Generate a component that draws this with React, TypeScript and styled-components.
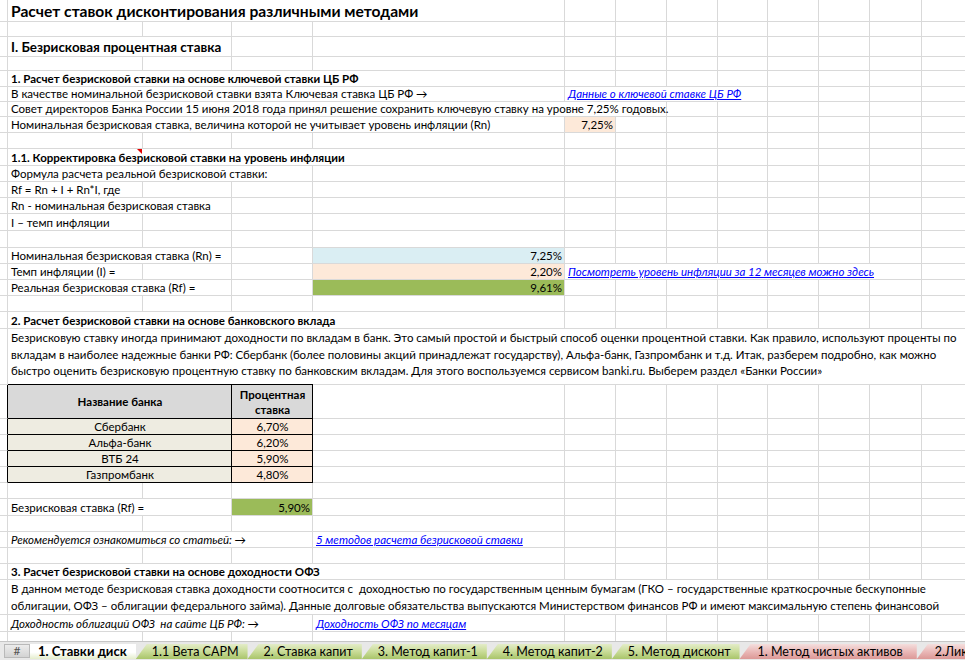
import React from "react";
import styled, { createGlobalStyle, css } from "styled-components";

const FONT = `Lato, "Liberation Sans", Arial, sans-serif`;

const GlobalStyle = createGlobalStyle`
  html, body { margin: 0; padding: 0; background: #fff; }
  body { font-family: ${FONT}; color: #000; }
`;

const COLS = [8, 135, 89, 81, 252, 51, 51, 51, 50, 51, 51, 52, 120];
const GRID = COLS.map((w) => `${w}px`).join(" ");
const TOTAL = COLS.reduce((a, b) => a + b, 0);
const GRIDLINE = "#d9d9d9";

const Page = styled.div`
  width: 965px;
  height: 660px;
  overflow: hidden;
  display: flex;
  flex-direction: column;
  background: #fff;
`;

const Sheet = styled.div`
  flex: none;
  height: 641px;
  overflow: hidden;
`;

const Row = styled.div<{ $h: number }>`
  display: grid;
  grid-template-columns: ${GRID};
  width: ${TOTAL}px;
  height: ${(p) => p.$h}px;
`;

type VAlign = "top" | "center" | "bottom";

const Cell = styled.div<{
  $span: number;
  $bg?: string;
  $align?: "left" | "center" | "right";
  $rline?: string;
  $bline?: string;
  $top?: string;
  $v?: VAlign;
  $bold?: boolean;
  $italic?: boolean;
  $size?: number;
  $lh?: number;
  $mark?: boolean;
}>`
  grid-column: span ${(p) => p.$span};
  box-sizing: border-box;
  min-width: 0;
  border-right: 1px solid ${(p) => p.$rline ?? GRIDLINE};
  border-bottom: 1px solid ${(p) => p.$bline ?? GRIDLINE};
  background: ${(p) => p.$bg ?? "transparent"};
  display: flex;
  flex-direction: column;
  justify-content: ${(p) =>
    p.$v === "top" ? "flex-start" : p.$v === "center" ? "center" : "flex-end"};
  text-align: ${(p) => p.$align ?? "left"};
  padding: ${(p) => (p.$v === "top" ? "1px 2px 0 3px" : "0 2px 0 3px")};
  white-space: pre;
  font-size: ${(p) => p.$size ?? 11.5}px;
  font-weight: ${(p) => (p.$bold ? 700 : 400)};
  font-style: ${(p) => (p.$italic ? "italic" : "normal")};
  line-height: ${(p) => p.$lh ?? 15}px;
  color: #000;
  ${(p) => p.$top && css`box-shadow: 0 -1px 0 ${p.$top};`}
  ${(p) => p.$mark && css`position: relative;`}
`;

const CommentMark = styled.span`
  position: absolute;
  top: 0;
  left: 129px;
  width: 0;
  height: 0;
  border-top: 5px solid #e00000;
  border-left: 5px solid transparent;
`;

const Link = styled.span`
  color: #0000ff;
  font-style: italic;
  text-decoration: underline;
`;

/* ---------- tab bar ---------- */

const TabBar = styled.div`
  flex: none;
  height: 19px;
  box-sizing: border-box;
  border-top: 1px solid #c6c6c6;
  background: #e8e8e8;
  display: flex;
  align-items: flex-start;
  padding: 2px 0 0 4px;
  font-family: ${FONT};
  overflow: hidden;
`;

const NavBox = styled.div`
  flex: none;
  width: 26px;
  height: 14px;
  box-sizing: border-box;
  border: 1px solid #b9b9b9;
  background: linear-gradient(#ececec, #d3d3d3);
  color: #555;
  font-size: 12px;
  line-height: 12px;
  text-align: center;
`;

type TabKind = "active" | "green" | "red";

const tabBg: Record<TabKind, string> = {
  active: "linear-gradient(#ffffff 0%, #ffffff 55%, #e4edcc 100%)",
  green: "linear-gradient(#e3ecc8 0%, #c9dc98 50%, #a9c56a 100%)",
  red: "linear-gradient(#f4dedd 0%, #eab9b8 50%, #dc9896 100%)",
};

const tabPad: Record<TabKind, string> = {
  active: "0 9px 0 8px",
  green: "0 9px 0 16px",
  red: "0 14px 0 18px",
};

const Tab = styled.div<{ $kind: TabKind }>`
  flex: none;
  height: 15px;
  box-sizing: border-box;
  background: ${(p) => tabBg[p.$kind]};
  font-size: ${(p) => (p.$kind === "active" ? 13 : 12.5)}px;
  line-height: 15px;
  color: #000;
  white-space: nowrap;
  font-weight: ${(p) => (p.$kind === "active" ? 700 : 400)};
  padding: ${(p) => tabPad[p.$kind]};
  clip-path: ${(p) =>
    p.$kind === "active"
      ? "none"
      : "polygon(0 100%, 11px 0, 100% 0, 100% 100%)"};
`;

/* ---------- data ---------- */

type CellSpec = {
  span?: number;
  text?: React.ReactNode;
  bg?: string;
  align?: "left" | "center" | "right";
  rline?: string;
  bline?: string;
  top?: string;
  v?: VAlign;
  bold?: boolean;
  italic?: boolean;
  size?: number;
  lh?: number;
  mark?: boolean;
};

type RowSpec = { h: number; a?: CellSpec; cells?: CellSpec[] };

const PEACH = "#fde9d9";
const BLUE = "#daeef3";
const GREEN = "#9bbb59";
const BEIGE = "#eeece1";
const HEAD = "#d9d9d9";
const BLACK = "#000";

const tableA: CellSpec = { rline: BLACK };

const bankRow = (name: string, value: string): RowSpec => ({
  h: 16,
  a: tableA,
  cells: [
    { span: 2, text: name, bg: BEIGE, align: "center", rline: BLACK, bline: BLACK },
    { text: value, bg: PEACH, align: "center", rline: BLACK, bline: BLACK },
  ],
});

const ROWS: RowSpec[] = [
  {
    h: 22,
    cells: [
      { span: 4, text: "Расчет ставок дисконтирования различными методами", bold: true, size: 15.6, lh: 20 },
    ],
  },
  { h: 15 },
  { h: 20, cells: [{ span: 2, text: "I. Безрисковая процентная ставка", bold: true, size: 13.4, lh: 18 }] },
  { h: 14 },
  { h: 15, cells: [{ span: 4, text: "1. Расчет безрисковой ставки на основе ключевой ставки ЦБ РФ", bold: true }] },
  {
    h: 15,
    cells: [
      { span: 4, text: "В качестве номинальной безрисковой ставки взята Ключевая ставка ЦБ РФ →" },
      { span: 4, text: <Link>Данные о ключевой ставке ЦБ РФ</Link> },
    ],
  },
  {
    h: 16,
    cells: [
      {
        span: 6,
        text: "Совет директоров Банка России 15 июня 2018 года принял решение сохранить ключевую ставку на уровне 7,25% годовых.",
      },
    ],
  },
  {
    h: 16,
    cells: [
      { span: 4, text: "Номинальная безрисковая ставка, величина которой не учитывает уровень инфляции (Rn)" },
      { text: "7,25%", bg: PEACH, align: "right" },
    ],
  },
  { h: 16 },
  {
    h: 17,
    cells: [{ span: 4, text: "1.1. Корректировка безрисковой ставки на уровень инфляции", bold: true, mark: true }],
  },
  { h: 16, cells: [{ span: 3, text: "Формула расчета реальной безрисковой ставки:" }] },
  { h: 16, cells: [{ text: "Rf = Rn + I + Rn*I, где" }] },
  { h: 16, cells: [{ span: 2, text: "Rn - номинальная безрисковая ставка" }] },
  { h: 17, cells: [{ text: "I – темп инфляции" }] },
  { h: 17 },
  {
    h: 16,
    cells: [{ span: 2, text: "Номинальная безрисковая ставка (Rn) =" }, {}, { text: "7,25%", bg: BLUE, align: "right" }],
  },
  {
    h: 16,
    cells: [
      { text: "Темп инфляции (I) =" },
      {},
      {},
      { text: "2,20%", bg: PEACH, align: "right" },
      { span: 7, text: <Link>Посмотреть уровень инфляции за 12 месяцев можно здесь</Link> },
    ],
  },
  {
    h: 16,
    cells: [{ span: 2, text: "Реальная безрисковая ставка (Rf) =" }, {}, { text: "9,61%", bg: GREEN, align: "right" }],
  },
  { h: 16 },
  { h: 17, cells: [{ span: 4, text: "2. Расчет безрисковой ставки на основе банковского вклада", bold: true }] },
  {
    h: 56,
    cells: [
      {
        span: 12,
        v: "top",
        lh: 16.5,
        text: (
          <>
            {"Безрисковую ставку иногда принимают доходности по вкладам в банк. Это самый простой и быстрый способ оценки процентной ставки. Как правило, используют проценты по"}
            <br />
            {"вкладам в наиболее надежные банки РФ: Сбербанк (более половины акций принадлежат государству), Альфа-банк, Газпромбанк и т.д. Итак, разберем подробно, как можно"}
            <br />
            {"быстро оценить безрисковую процентную ставку по банковским вкладам. Для этого воспользуемся сервисом banki.ru. Выберем раздел «Банки России»"}
          </>
        ),
      },
    ],
  },
  {
    h: 34,
    a: tableA,
    cells: [
      { span: 2, text: "Название банка", bg: HEAD, bold: true, align: "center", v: "center", rline: BLACK, bline: BLACK, top: BLACK },
      {
        text: (
          <>
            Процентная
            <br />
            ставка
          </>
        ),
        bg: HEAD,
        bold: true,
        align: "center",
        v: "center",
        rline: BLACK,
        bline: BLACK,
        top: BLACK,
      },
    ],
  },
  bankRow("Сбербанк", "6,70%"),
  bankRow("Альфа-банк", "6,20%"),
  bankRow("ВТБ 24", "5,90%"),
  bankRow("Газпромбанк", "4,80%"),
  { h: 16 },
  { h: 17, cells: [{ span: 2, text: "Безрисковая ставка (Rf) =" }, { text: "5,90%", bg: GREEN, align: "right" }] },
  { h: 16 },
  {
    h: 16,
    cells: [
      { span: 3, text: "Рекомендуется ознакомиться со статьей: →", italic: true },
      { text: <Link>5 методов расчета безрисковой ставки</Link> },
    ],
  },
  { h: 16 },
  { h: 16, cells: [{ span: 4, text: "3. Расчет безрисковой ставки на основе доходности ОФЗ", bold: true }] },
  {
    h: 34,
    cells: [
      {
        span: 12,
        v: "top",
        lh: 16.5,
        text: (
          <>
            {"В данном методе безрисковая ставка доходности соотносится с  доходностью по государственным ценным бумагам (ГКО – государственные краткосрочные бескупонные"}
            <br />
            {"облигации, ОФЗ – облигации федерального займа). Данные долговые обязательства выпускаются Министерством финансов РФ и имеют максимальную степень финансовой"}
          </>
        ),
      },
    ],
  },
  {
    h: 18,
    cells: [
      { span: 3, text: "Доходность облигаций ОФЗ  на сайте ЦБ РФ: →", italic: true },
      { text: <Link>Доходность ОФЗ по месяцам</Link> },
    ],
  },
  { h: 20 },
];

const TABS: { label: string; kind: TabKind }[] = [
  { label: "1. Ставки диск", kind: "active" },
  { label: "1.1 Вета CAPM", kind: "green" },
  { label: "2. Ставка капит", kind: "green" },
  { label: "3. Метод капит-1", kind: "green" },
  { label: "4. Метод капит-2", kind: "green" },
  { label: "5. Метод дисконт", kind: "green" },
  { label: "1. Метод чистых активов", kind: "red" },
  { label: "2.Ликвидационная стоимость", kind: "red" },
];

function renderCell(c: CellSpec, key: React.Key) {
  return (
    <Cell
      key={key}
      $span={c.span ?? 1}
      $bg={c.bg}
      $align={c.align}
      $rline={c.rline}
      $bline={c.bline}
      $top={c.top}
      $v={c.v}
      $bold={c.bold}
      $italic={c.italic}
      $size={c.size}
      $lh={c.lh}
      $mark={c.mark}
    >
      {c.mark && <CommentMark />}
      <span>{c.text}</span>
    </Cell>
  );
}

function SheetRow({ spec }: { spec: RowSpec }) {
  const cells: CellSpec[] = [spec.a ?? {}, ...(spec.cells ?? [])];
  const used = cells.reduce((s, c) => s + (c.span ?? 1), 0);
  for (let i = used; i < COLS.length; i++) cells.push({});
  return <Row $h={spec.h}>{cells.map((c, i) => renderCell(c, i))}</Row>;
}

export default function App() {
  return (
    <>
      <GlobalStyle />
      <Page>
        <Sheet>
          {ROWS.map((r, i) => (
            <SheetRow key={i} spec={r} />
          ))}
        </Sheet>
        <TabBar>
          <NavBox>#</NavBox>
          {TABS.map((t) => (
            <Tab key={t.label} $kind={t.kind}>
              {t.label}
            </Tab>
          ))}
        </TabBar>
      </Page>
    </>
  );
}
